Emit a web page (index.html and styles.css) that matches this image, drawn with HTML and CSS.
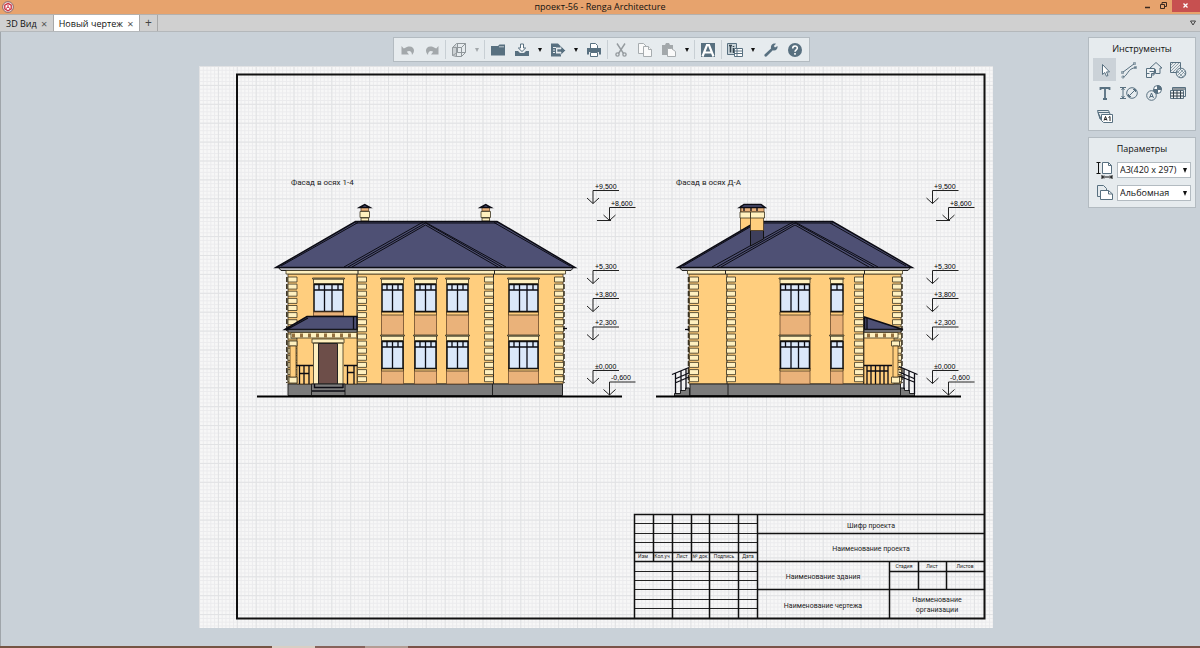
FILE: index.html
```
<!DOCTYPE html>
<html lang="ru">
  <head>
    <meta charset="UTF-8" />
    <title>проект-56 - Renga Architecture</title>
    <link rel="stylesheet" href="styles.css">
  </head>
  <body>
    <header class="titlebar">
      <svg class="logo" viewBox="0 0 12 12">
        <circle cx="6" cy="6" r="5.4" fill="#f3dfe0" stroke="#8d6b6b" />
        <path d="M6 2.4l3.2 1.8v3.7L6 9.7 2.8 7.9V4.2z" fill="#fff" stroke="#cc3344" stroke-width="1.3" />
        <path d="M6 6V3.5M6 6l2 1.5M6 6L4 7.500" stroke="#cc3344" />
      </svg>
      <h1>проект-56 - Renga Architecture</h1>
      <div class="window-buttons">
        <button aria-label="Свернуть"><svg width="15" height="12"><path d="M4 7.500h5" stroke="#3a2a20" stroke-width="1.500" /></svg></button>
        <button aria-label="Восстановить"><svg width="16" height="12" fill="none" stroke="#3a2a20"><path d="M4.500 4.500h4v4h-4zM6 4V2.500h4.500v4H9" /></svg></button>
        <button class="close" aria-label="Закрыть"><svg width="28" height="12"><path d="M11.500 3.500l4 4m0-4l-4 4" stroke="#fff" stroke-width="1.300" /></svg></button>
      </div>
    </header>

    <nav class="tabs">
      <div class="tab">
        <a href="#">3D Вид</a>
        <button aria-label="Закрыть вкладку">×</button>
      </div>
      <div class="tab active">
        <a href="#">Новый чертеж</a>
        <button aria-label="Закрыть вкладку">×</button>
      </div>
      <button class="tab-add" aria-label="Новая вкладка">+</button>
      <button class="tab-menu" aria-label="Список вкладок"><svg width="8" height="6"><path d="M1.500 1h5L4 5z" fill="none" stroke="#444" /></svg></button>
    </nav>

    <main class="workspace">
      <div class="toolbar">
        <button class="muted" aria-label="Отменить"><svg viewBox="0 0 16 16"><path d="M1.500 4v8.500H9L6.800 9.800C9 8 12 8.800 12 13c5-5.500 0-12-8.200-6.500z" /></svg></button>
        <button class="muted" aria-label="Повторить"><svg viewBox="0 0 16 16"><path d="M14.500 4v8.500H7l2.200-2.700C7 8 4 8.800 4 13c-5-5.500 0-12 8.200-6.500z" /></svg></button>
        <span class="sep"></span>
        <button class="muted" aria-label="Вид"><svg viewBox="0 0 16 16"><path d="M1.500 5.500v8l4 1v-9zM5.500 5.500h5v9h-5zM1.500 5.500l4-4h9l-4 4M14.500 1.500v9l-4 4M6.500 1.500v9h8M6.500 10.500l-5 3" fill="none" stroke="#8f969a" /><path d="M1.500 5.500l4-4v13l-4-1z" opacity=".4" /></svg></button>
        <button class="arrow muted" aria-label="Варианты вида"></button>
        <span class="sep"></span>
        <button aria-label="Открыть"><svg viewBox="0 0 16 16"><path d="M1 4h7l1.500-1.500H15V13.500H1z" /><path d="M9 4.800h5" stroke="#c3ccd2" /></svg></button>
        <button aria-label="Сохранить"><svg viewBox="0 0 16 16"><path d="M1 9h3l2 2h4l2-2h3v5H1z" /><path d="M6.500 2h3v4h2.200L8 9.500 4.300 6h2.200z" fill="#fff" stroke="#587080" /></svg></button>
        <button class="arrow" aria-label="Варианты сохранения"></button>
        <button aria-label="Экспорт"><svg viewBox="0 0 16 16"><path d="M1 1.500h7l3 3v1H6v6h5v3H1z" /><path d="M7 7h4V4L15.500 8.500 11 13v-3H7z" stroke="#e6ebee" stroke-width=".6" /><path d="M3 5.500h3M3 8h2M3 10.500h2" stroke="#e6ebee" /></svg></button>
        <button class="arrow" aria-label="Варианты экспорта"></button>
        <button aria-label="Печать"><svg viewBox="0 0 16 16"><path d="M4.500 6V1.500h5L11.500 3.500V6" fill="#fff" stroke="#587080" /><path d="M1 6h14v6.500h-2V10H3v2.500H1z" /><path d="M4.500 10.500h7v4h-7z" fill="#fff" stroke="#587080" /></svg></button>
        <span class="sep"></span>
        <button class="muted" aria-label="Вырезать"><svg viewBox="0 0 16 16" fill="none" stroke="#959b9f" stroke-width="1.400"><path d="M4 1.500l6.500 10M12 1.500L5.500 11.500" /><circle cx="4.500" cy="12.500" r="1.600" /><circle cx="11.500" cy="12.500" r="1.600" /></svg></button>
        <button class="muted" aria-label="Копировать"><svg viewBox="0 0 16 16" fill="#fafafa" stroke="#a7acaf"><path d="M1.500 1.500h5l3 3v7h-8z" /><path d="M6.500 4.500h5l3 3v7h-8z" /><path d="M11.500 4.500v3h3" /></svg></button>
        <button class="muted" aria-label="Вставить"><svg viewBox="0 0 16 16"><path d="M1 3h3l1-2h3l1 2h3v10H1z" /><path d="M6.500 6.500h4l4 3v5h-8z" fill="#fafafa" stroke="#a7acaf" /></svg></button>
        <button class="arrow" aria-label="Варианты вставки"></button>
        <span class="sep"></span>
        <button aria-label="Стили текста"><svg viewBox="0 0 16 16"><path d="M1 1h14v14H1z" /><path d="M2.500 14.500L7 3h2l4.500 11.500M5 10.500h6" fill="none" stroke="#fff" stroke-width="2.200" /></svg></button>
        <span class="sep"></span>
        <button aria-label="Стили"><svg viewBox="0 0 16 16" fill="none" stroke="#587080"><path d="M.5 1.500h9v11h-9z" fill="#c9d4da" /><path d="M2 3.500h3M3.500 3.500v7M6.500 4v1M6.500 6v5" stroke="#34434d" stroke-width="1.600" /><path d="M7.500 6.500h8v8h-8z" fill="#fff" /><path d="M7.500 9h8M7.500 11.500h8M10 6.500v8" /></svg></button>
        <button class="arrow" aria-label="Выбор стилей"></button>
        <button aria-label="Настройки"><svg viewBox="0 0 16 16"><path d="M1.500 12.500L8 6.500C7.500 3 10 1 13 1.800L10.800 4l1.200 1.600L14.500 4C15 7.500 12.500 9 9.800 8.300L3.500 14.600C1.800 15 1 13.800 1.500 12.500z" /></svg></button>
        <button aria-label="Справка"><svg viewBox="0 0 16 16"><circle cx="8" cy="8" r="7" /><path d="M5.700 6.500C5.700 3 10.500 3.300 10.300 6.200 10.200 7.800 8 7.800 8 9.700M8 11v1.800" fill="none" stroke="#fff" stroke-width="1.600" /></svg></button>
      </div>

      <svg class="sheet" viewBox="199 66 794 562">
        <defs>
          <pattern id="fine" x="199" y="66" width="3.780" height="3.780" patternUnits="userSpaceOnUse">
            <path d="M0 .5H4M.5 0V4" stroke="#ebebed" />
          </pattern>
          <pattern id="coarse" x="199" y="66" width="18.900" height="18.900" patternUnits="userSpaceOnUse">
            <path d="M0 .5H19M.5 0V19" stroke="#e1e2e4" />
          </pattern>

          <!-- corner stones, one full column -->
          <path id="quoins" class="stone" d="M0 277h9v5H0zM0 284.100h9v5H0zM0 291.200h9v5H0zM0 298.400h9v5H0zM0 305.500h9v5H0zM0 312.600h9v5H0zM0 319.700h9v5H0zM0 326.800h9v5H0zM0 334h9v5H0zM0 341.100h9v5H0zM0 348.200h9v5H0zM0 355.300h9v5H0zM0 362.400h9v5H0zM0 369.600h9v5H0zM0 376.700h9v5H0z" />

          <g id="win1">
            <path class="stone" d="M0 279h12.500v4.500H0zM-1 278h14.500v1H-1z" />
            <path class="glass" d="M.5 284.500h12v27H.5z" />
            <path class="bars" d="M.5 290h12M6.500 284v6" />
          </g>
          <g id="win2">
            <path class="stone" d="M0 279h22v4.500H0zM-1 278h24v1H-1z" />
            <path class="glass" d="M.5 284.500h21v27H.5z" />
            <path class="bars" d="M.5 290h21M5.500 284v6M11 284v27M16.500 284v6" />
          </g>
          <g id="win3">
            <path class="stone" d="M0 279h30v4.500H0zM-1 278h32v1H-1z" />
            <path class="glass" d="M.5 284.500h29v27H.5z" />
            <path class="bars" d="M.5 290h29M5.500 284v6M11 284v27M18.500 284v27M24.500 284v6" />
          </g>

          <!-- two storeys of windows with the panels under them -->
          <g id="bay1">
            <path class="panel" d="M0 312h12.500v72H0z" />
            <path class="wall" d="M0 312h12.500v3H0zM0 368h12.500v3H0z" />
            <use href="#win1" /><use href="#win1" y="57" />
          </g>
          <g id="bay2">
            <path class="panel" d="M0 312h22v72H0z" />
            <path class="wall" d="M0 312h22v3H0zM0 368h22v3H0z" />
            <use href="#win2" /><use href="#win2" y="57" />
          </g>
          <g id="bay3">
            <path class="panel" d="M0 312h30v72H0z" />
            <path class="wall" d="M0 312h30v3H0zM0 368h30v3H0z" />
            <use href="#win3" /><use href="#win3" y="57" />
          </g>

          <g id="chimney">
            <path class="panel" d="M1.500 207h7.500v4H1.500z" />
            <path class="stone" d="M1.500 218h7.500v3H1.500zM.5 211.500H10v6H.5z" />
            <path class="roof" d="M0 207.500L5.200 204.500 10.500 207.500z" />
          </g>

          <path id="mark" class="thin" d="M26 0H0V13M-6 7.500L0 13 6 7.500" />
        </defs>

        <rect x="199" y="66" width="794" height="562" fill="#f7f7f7" />
        <rect x="199" y="66" width="794" height="562" fill="url(#fine)" />
        <rect x="199" y="66" width="794" height="562" fill="url(#coarse)" />
        <path class="frame" d="M237 74.500H984.500V618.500H237z" />

        <!-- front elevation -->
        <text class="gost" x="291" y="185">Фасад в осях 1-4</text>
        <path class="wall" d="M288 274h275v110H288z" />
        <path class="fascia" d="M278 267h296l-3 3.500H281z" />
        <path class="stone" d="M286 270.500h279.500v3.500H286z" />
        <path class="thin" d="M358 270v4M494.500 270v4M357 274v110M493.500 274v110" />
        <use href="#chimney" x="359.500" /><use href="#chimney" x="480.500" />
        <path class="roof" d="M276 267.500L355.500 221.500H497L575 267.500z" />
        <path class="ridge" d="M281 266L358 222.500M570 266L494 222.500M355 223h142" />
        <path class="ridge" d="M344 267L424 221.500 506 267M348 267L425.500 223 502 267M352 267L425.500 225 498 267" />
        <path class="base" d="M288 384h274.500v11.500H288z" />
        <path class="thin" d="M492.500 384v11.500" />
        <path class="reveal" d="M286.800 277v106M564 277v106" />
        <use href="#quoins" x="288" /><use href="#quoins" x="357.500" /><use href="#quoins" x="484.500" /><use href="#quoins" x="554.500" />
        <use href="#win3" x="313.500" />
        <path class="panel" d="M313.500 312h30v4h-30z" />
        <use href="#bay2" x="381.500" /><use href="#bay2" x="414.500" /><use href="#bay2" x="446.500" /><use href="#bay3" x="508.500" />
        <path class="bars" d="M563 328.500h4" />

        <!-- porch -->
        <path class="wall" d="M297 331h60v53h-60z" />
        <path class="roof" d="M285 329.500L307 316.500H357V329.500z" />
        <path class="bars" d="M353.500 317v12M288 329L308 318" />
        <path class="fascia" d="M288 330h69v2h-69z" />
        <path class="stone" d="M291 332.500h66v5.500h-66z" />
        <path class="bracket" d="M292 335.500h65" />
        <path class="stone" d="M289 341h8v5h-8zM289 377h8v6h-8z" />
        <path class="wall" d="M290 346h6v31h-6z" />
        <path class="stone" d="M312 339h32v4h-32zM313.500 343h29.500v41H313.500z" />
        <path class="door" d="M318.500 343.500h19v40.500h-19z" />
        <path class="bars" d="M296 365.500h17M299.500 366v18M304 366v18M309 366v18M300 373.500h9M344 365.500h13M347.500 366v18M354 366v18M348 372.500h6" />
        <path class="base" d="M311.500 384h33.500v11.500H311.500z" />
        <path class="bars" d="M314 387.500h29M312 391h33M314.500 384v4M343 384v4" />
        <path class="ground" d="M257 396.500H622" />

        <g>
          <use href="#mark" x="593" y="190.500" /><text class="level" x="595" y="189">+9,500</text>
          <use href="#mark" x="609.500" y="207.500" /><text class="level" x="611" y="206">+8,600</text>
          <use href="#mark" x="593" y="270.500" /><text class="level" x="595" y="269">+5,300</text>
          <use href="#mark" x="593" y="298.500" /><text class="level" x="595" y="297">+3,800</text>
          <use href="#mark" x="593" y="327" /><text class="level" x="595" y="325">+2,300</text>
          <use href="#mark" x="593" y="370.500" /><text class="level" x="595" y="369">±0,000</text>
          <use href="#mark" x="609.500" y="382" /><text class="level" x="611" y="380">-0,600</text>
          <path class="thin" d="M597 220.500h14" />
        </g>

        <!-- side elevation -->
        <text class="gost" x="676" y="185">Фасад в осях Д-А</text>
        <path class="wall" d="M689 274h212v110H689z" />
        <path class="fascia" d="M679 267h232l-3 3.500H682z" />
        <path class="stone" d="M687.500 270.500h215v3.500h-215z" />
        <path class="thin" d="M725.500 270v4M864.500 270v4M727 274v110M863.500 274v110" />
        <path class="wall" d="M740.500 206h10v24h-10z" />
        <path class="roof" d="M678 267.500L750 225.500 757 221.500H832.500L912 267.500z" />
        <path class="ridge" d="M683 266L750 227M764 223h69M906 266L830 223" />
        <path class="ridge" d="M712 267L794 221.500 878 267M717 267L795 223 874 267M721 267L795 225 869 267" />
        <path class="roof-dark" d="M750.500 230h13v9l-13 7z" />
        <path class="wall" d="M750.500 207h13v23.500h-13z" />
        <path class="panel" d="M741 207h23v5h-23z" />
        <path class="bars" d="M744 208v3M751 208v3M757 208v3" />
        <path class="stone" d="M740 212h10.500v6H740zM750.500 212h14v6h-14z" />
        <path class="roof" d="M739.500 207.500L744 204.500h17l4 3z" />
        <path class="base" d="M690 384h210.500v11.500H690z" />
        <path class="thin" d="M728 384v11.500" />
        <path class="reveal" d="M688.500 277v106M902 277v106" />
        <use href="#quoins" x="689.500" /><use href="#quoins" x="726.500" /><use href="#quoins" x="854.500" /><use href="#quoins" x="892.500" />
        <use href="#bay3" x="780" /><use href="#bay1" x="830.500" />
        <path class="bars" d="M685 329.500h4" />

        <path class="wall" d="M864 330h30v54h-30z" />
        <path class="roof" d="M864.500 317L903 329.500H864.500z" />
        <path class="bars" d="M867 318v11" />
        <path class="fascia" d="M864 330h37v2h-37z" />
        <path class="stone" d="M864 332.500h34v5.500h-34z" />
        <path class="bracket" d="M867 335.500h28" />
        <path class="stone" d="M891.500 341h8v5h-8zM891.500 377h8v6h-8z" />
        <path class="wall" d="M893 346h5v31h-5z" />
        <path class="bars" d="M864 365.500h28M867 366v18M871 366v18M875.500 366v18M880 366v18M884 366v18M888 366v18M867 371h21" />
        <path class="base" d="M900.500 388h4v2.500h5v3h5v2.500h-14z" />
        <path class="base" d="M689.500 388h-4v2.500h-5v3h-6v2.500h15z" />
        <path class="bars" d="M899 366.500L917.500 374.500M899 372L914 378.500M899 376L914 382M904 369v20M909 371v20M914.500 373v21" />
        <path class="bars" d="M689 367.500L672 374.500M689 373L675 379M689 377L675 383M686 369v20M681 371v20M675.500 373v21" />
        <path class="ground" d="M656 396.500H961" />

        <g>
          <use href="#mark" x="932.500" y="190.500" /><text class="level" x="934" y="189">+9,500</text>
          <use href="#mark" x="948.500" y="207.500" /><text class="level" x="950" y="206">+8,600</text>
          <use href="#mark" x="932.500" y="270.500" /><text class="level" x="934" y="269">+5,300</text>
          <use href="#mark" x="932.500" y="298.500" /><text class="level" x="934" y="297">+3,800</text>
          <use href="#mark" x="932.500" y="327" /><text class="level" x="934" y="325">+2,300</text>
          <use href="#mark" x="932.500" y="370.500" /><text class="level" x="934" y="369">±0,000</text>
          <use href="#mark" x="948.500" y="382" /><text class="level" x="950" y="380">-0,600</text>
          <path class="thin" d="M936 220.500h14" />
        </g>

        <!-- title block -->
        <path class="thin" d="M634 523.500H757M634 533.500H757M634 542.500H757M634 571.500H757M634 580.500H757M634 589.500H757M634 599.500H757M634 608.500H757" />
        <path class="stamp" d="M634.500 618V514.500H984M634 552.500H757M634 561.500H984M757 533.500H984M757 589.500H984M889.500 571.500H984M653.500 514V561M672.500 514V618M691.500 514V561M709.500 514V618M738.500 514V618M757.500 514V618M889.500 561V618M918.500 561V589M946.500 561V589" />
        <g class="gost middle small">
          <text x="643" y="558">Изм</text>
          <text x="662" y="558">Кол.уч</text>
          <text x="682" y="558">Лист</text>
          <text x="700" y="558">№ док</text>
          <text x="724" y="558">Подпись</text>
          <text x="748" y="558">Дата</text>
          <text x="904" y="568">Стадия</text>
          <text x="932" y="568">Лист</text>
          <text x="965" y="568">Листов</text>
        </g>
        <g class="gost middle caption">
          <text x="871" y="528">Шифр проекта</text>
          <text x="871" y="551">Наименование проекта</text>
          <text x="823" y="579">Наименование здания</text>
          <text x="823" y="608">Наименование чертежа</text>
          <text x="937" y="602">Наименование</text>
          <text x="937" y="612">организации</text>
        </g>
      </svg>

      <aside class="side">
        <section class="card">
          <h2>Инструменты</h2>
          <div class="tools">
            <button class="selected" aria-label="Выбор"><svg viewBox="0 0 18 18"><path d="M6.500 3.500v10l2.300-2 1.600 3.700 1.600-.7-1.500-3.600h3z" fill="#fff" /></svg></button>
            <button aria-label="Линия"><svg viewBox="0 0 18 18"><path d="M2.500 11.500L14.500 2.500M3 16C8 15 7 7.500 16 6.500" /><path d="M1.500 10.500h2v2h-2zM13.500 1.500h2v2h-2zM2 15h2v2H2zM14.500 5.500h2v2h-2z" stroke-width=".6" /></svg></button>
            <button aria-label="Вид"><svg viewBox="0 0 18 18"><path d="M5 7L11 1.500 17 7h-2v5.500h-4.500V8.500H6.500V7z" /><path d="M1.500 7.500h8v5h-3v4h-5z" fill="#eef2f4" /><path d="M4.500 10.500h4.500V14H6M1 12.500h3.500" /></svg></button>
            <button aria-label="Штриховка"><svg viewBox="0 0 18 18"><path d="M1.500 1.500h10v10h-10z" /><path d="M2 4l2-2M2 7l5-5M2 10l8-8M4 11l7-7M7 11l4-4" stroke-width=".6" /><circle cx="12" cy="12" r="4.800" fill="#e9eef1" /><path d="M8 12l4-4M8.500 14.500l6-6M10 16l6-6M13 16.500l3.500-3.500M8 10l6 6M11 8l5.500 5.500" stroke-width=".6" /></svg></button>
            <button aria-label="Текст"><svg viewBox="0 0 18 18"><path d="M4.500 6V4h9v2M9 4v11M7 15h4" stroke-width="1.800" /></svg></button>
            <button aria-label="Размер"><svg viewBox="0 0 18 18"><path d="M0 3.500h6M0 14.500h6M3 4v10M1.500 6L3 4l1.500 2M1.500 12L3 14l1.500-2" /><circle cx="12" cy="9" r="5.300" /><path d="M8.500 12.500l7-7M13 5.500h2.500V8M8.500 10v2.500H11" /></svg></button>
            <button aria-label="Обозначение"><svg viewBox="0 0 18 18"><circle cx="6.500" cy="11.500" r="4.800" /><path d="M4.500 14l2-5 2 5M5 12.500h3M10 8l3-3" /><circle cx="12.500" cy="5.500" r="4" fill="#fff" /><path d="M12.500 1.500v4h4a4 4 0 0 0-4-4zM12.500 5.500v4a4 4 0 0 1-4-4z" fill="#587080" /></svg></button>
            <button aria-label="Таблица"><svg viewBox="0 0 18 18"><path d="M3.500 3.500h13v9h-13z" /><path d="M1.500 6.500h13v8h-13z" fill="#eef2f4" /><path d="M1.500 9h13M1.500 12h13M4.500 6.500v8M8 6.500v8M11.500 6.500v8M4 5h12" stroke="#34434d" /></svg></button>
            <button aria-label="Лист"><svg viewBox="0 0 18 18"><path d="M4 12L1.500 3.500h11L14 7M5 13L2 5.500h11M6 14L3 7.500" /><path d="M5.500 7.500h11v8h-9l-2-2z" fill="#fff" /><path d="M8 13.500l1.500-4 1.500 4M8.500 12.500h2M12.500 10.500l1.500-1v4.500" stroke="#222" /></svg></button>
          </div>
        </section>

        <section class="card">
          <h2>Параметры</h2>
          <div class="param">
            <label for="format" aria-label="Формат"><svg viewBox="0 0 18 18"><path d="M6.500 1.500h6l3 3v8h-9z" fill="#fff" /><path d="M12.500 1.500v3h3" /><path d="M2.500 1.500v11M.5 1.500h4M.5 12.500h4M6 16h10M6 14v4M16 14v4M8 14.500L6.500 16 8 17.500M14 14.500l1.500 1.500-1.500 1.500" stroke="#111" /></svg></label>
            <div class="select"><select id="format"><option>A3(420 x 297)</option></select></div>
          </div>
          <div class="param">
            <label for="orient" aria-label="Ориентация"><svg viewBox="0 0 18 18" fill="#fff"><path d="M1.500 1.500h6l3 3v8h-9z" /><path d="M4.500 6.500h8l4 3.500v5.500h-12z" fill="#fff" /><path d="M12.500 6.500v3.500h4" /></svg></label>
            <div class="select"><select id="orient"><option>Альбомная</option></select></div>
          </div>
        </section>
      </aside>
    </main>

    <footer class="taskbar"></footer>
  </body>
</html>
```
FILE: styles.css
```
* {
  box-sizing: border-box;
}

body {
  margin: 0;
  min-height: 100vh;
  display: flex;
  flex-direction: column;
  font-family: "Open Sans", "Noto Sans", sans-serif;
  font-size: 9px;
  line-height: 12px;
  color: #111;
  background-color: #c9d1d8;
}

button {
  padding: 0;
  border: none;
  background: none;
  color: inherit;
  font: inherit;
  cursor: pointer;
}

svg {
  display: block;
}

h1,
h2 {
  margin: 0;
  font-size: 9px;
  font-weight: normal;
  text-align: center;
}

/* title bar */
.titlebar {
  display: grid;
  grid-template-columns: 60px 1fr 60px;
  height: 14px;
  background-color: #e7a36d;
}

.logo {
  width: 12px;
  height: 12px;
  margin: 1px 2px;
}

.titlebar h1 {
  line-height: 14px;
}

.window-buttons {
  display: flex;
  justify-content: flex-end;
  align-items: flex-start;
}

.window-buttons .close {
  background-color: #c75050;
}

/* tabs */
.tabs {
  display: flex;
  height: 18px;
  padding-left: 1px;
  background-color: #d0d0d0;
  border-top: 1px solid #b5b0ac;
  border-bottom: 1px solid #b4b8bb;
}

.tab {
  display: flex;
  align-items: center;
  gap: 4px;
  padding: 2px 5px 0;
  border-right: 1px solid #a8a8a8;
}

.tab.active {
  background-color: #fff;
}

.tab a {
  color: inherit;
  text-decoration: none;
}

.tab button {
  width: 7px;
  font-size: 11px;
  color: #555;
}

.tab-add {
  width: 18px;
  font-size: 12px;
  color: #444;
  border-right: 1px solid #a8a8a8;
}

.tab-menu {
  margin-left: auto;
  padding: 0 3px;
}

/* workspace */
.workspace {
  flex: 1;
  display: grid;
  grid-template-columns: 113px 1fr 112px;
  grid-template-rows: auto 1fr;
  row-gap: 4px;
  padding-top: 5px;
  border-left: 1px solid #9fa5aa;
}

.toolbar {
  grid-column: 2;
  justify-self: center;
  display: flex;
  align-items: center;
  height: 25px;
  padding: 0 2px;
  background-color: #e6ebee;
  border: 1px solid #b3bbc1;
}

.toolbar button {
  width: 24px;
  height: 22px;
  fill: #587080;
}

.toolbar button svg {
  width: 16px;
  height: 16px;
  margin: 0 auto;
}

.toolbar .muted {
  fill: #a3a8ab;
  color: #a3a8ab;
}

.toolbar .arrow {
  width: 12px;
}

.arrow::before {
  content: "";
  display: block;
  width: 0;
  margin: 0 auto;
  border: 2px solid transparent;
  border-top: 4px solid currentColor;
  border-bottom: none;
}

.sep {
  width: 1px;
  height: 19px;
  margin: 0 1px;
  background-color: #c8cfd4;
}

.sheet {
  grid-column: 2;
  justify-self: center;
  height: calc(100vh - 86px);
  margin-right: 10px;
}

/* drawing */
.sheet path {
  stroke-width: 1;
}

.sheet .frame {
  fill: none;
  stroke: #111;
  stroke-width: 2;
}

.sheet .stamp {
  fill: none;
  stroke: #111;
  stroke-width: 1.5;
}

.thin {
  fill: none;
  stroke: #222;
}

.wall {
  fill: #ffce7e;
  stroke: #4d3a20;
}

.panel {
  fill: #eab27a;
  stroke: #6b4a2c;
}

.stone {
  fill: #fff0bf;
  stroke: #3a3220;
}

.sheet .stone,
.sheet .panel,
.sheet .wall {
  stroke-width: 0.8;
}

.fascia {
  fill: #b9b9c0;
  stroke: #222;
}

.base {
  fill: #7b7b7b;
  stroke: #222;
}

.door {
  fill: #6d4e49;
  stroke: #222;
}

.roof {
  fill: #4e5074;
  stroke: #0c0c14;
}

.sheet .roof {
  stroke-width: 1.5;
}

.roof-dark {
  fill: #3e3f5c;
  stroke: #111;
}

.ridge,
.bars {
  fill: none;
  stroke: #0c0c14;
}

.sheet .bars {
  stroke-width: 1.3;
}

.glass {
  fill: #dbe8fa;
  stroke: #111;
}

.sheet .glass {
  stroke-width: 1.5;
}

.sheet .reveal {
  stroke: #3a3220;
  stroke-width: 1.5;
  stroke-dasharray: 5 2;
}

.sheet .bracket {
  stroke: #94703f;
  stroke-width: 4;
  stroke-dasharray: 3 5;
}

.sheet .ground {
  stroke: #000;
  stroke-width: 2;
}

.level {
  font-family: "Liberation Sans", sans-serif;
  font-size: 7px;
}

.gost {
  font-family: Roboto, sans-serif;
  font-size: 8px;
  fill: #222;
}

.caption {
  font-size: 7px;
}

.small {
  font-size: 5px;
}

.middle {
  text-anchor: middle;
}

/* side panels */
.side {
  grid-column: 3;
  grid-row: 1 / 3;
  display: flex;
  flex-direction: column;
  gap: 6px;
  padding-right: 4px;
}

.card {
  padding: 5px 4px 3px;
  background-color: #e6ebee;
  border: 1px solid #b3bbc1;
}

.card h2 {
  margin-bottom: 3px;
}

.tools {
  display: grid;
  grid-template-columns: repeat(4, 1fr);
}

.tools button {
  width: 23px;
  height: 23px;
}

.tools .selected {
  background-color: #cbd2d8;
}

.card svg {
  width: 18px;
  height: 18px;
  margin: 0 auto;
  fill: none;
  stroke: #587080;
}

.param {
  display: flex;
  align-items: center;
  gap: 3px;
  height: 23px;
  padding-left: 3px;
}

.select {
  position: relative;
  flex: 1;
}

.select select {
  appearance: none;
  display: block;
  width: 100%;
  height: 16px;
  padding: 0 2px;
  font: inherit;
  color: inherit;
  background-color: #fff;
  border: 1px solid #b3bbc1;
  border-radius: 0;
}

.select::after {
  content: "";
  position: absolute;
  right: 4px;
  top: 6px;
  width: 0;
  border: 2px solid transparent;
  border-top: 5px solid #111;
  border-bottom: none;
  pointer-events: none;
}

/* sliver of the desktop taskbar */
.taskbar {
  height: 2px;
  background: linear-gradient(to right, #755543 272px, #d8cfc4 272px 315px, #86635a 315px 365px, #b39d94 365px 408px, #7a5348 408px);
}
```
